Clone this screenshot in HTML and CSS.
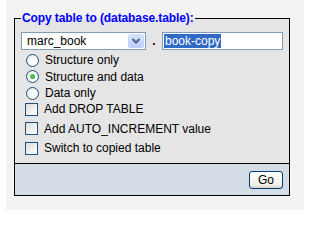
FILE: index.html
```html
<!DOCTYPE html>
<html>
<head>
<meta charset="utf-8">
<link rel="stylesheet" href="styles.css">
</head>
<body>
<div class="page">
  <fieldset class="box">
    <legend class="title">Copy table to (database.table):</legend>
    <div class="content">
      <div class="target">
        <div class="select">
          <span class="select-text">marc_book</span>
          <span class="select-btn">
            <svg width="16" height="14" viewBox="0 0 16 14"><path d="M4.5 5 L8 8.5 L11.5 5" fill="none" stroke="#4d6185" stroke-width="2"/></svg>
          </span>
        </div>
        <span class="dot">.</span>
        <div class="textbox"><span class="sel">book-copy</span></div>
      </div>
      <div class="options">
        <label class="row radio-row"><span class="radio"></span>Structure only</label>
        <label class="row radio-row"><span class="radio checked"></span>Structure and data</label>
        <label class="row radio-row"><span class="radio"></span>Data only</label>
      </div>
      <div class="checks">
        <label class="row check-row"><span class="check"></span>Add DROP TABLE</label>
        <label class="row check-row"><span class="check"></span>Add AUTO_INCREMENT value</label>
        <label class="row check-row"><span class="check"></span>Switch to copied table</label>
      </div>
    </div>
    <div class="footer">
      <button class="go">Go</button>
    </div>
  </fieldset>
</div>
</body>
</html>
```

FILE: styles.css
```css
html, body {
  margin: 0;
  padding: 0;
  background: #ffffff;
}
body {
  font-family: "Liberation Sans", Arial, sans-serif;
  font-size: 12px;
  color: #000;
}
.page {
  margin-left: 6px;
  width: 298px;
  height: 210px;
  background: #f3f3f3;
  padding: 12px 0 0 8px;
  box-sizing: border-box;
}
.box {
  width: 276px;
  box-sizing: border-box;
  margin: 0;
  padding: 0;
  border: 1px solid #000;
  background: #e5e5e5;
  min-width: 0;
}
.title {
  color: #0000ff;
  font-weight: bold;
  font-size: 12px;
  padding: 0 1px;
  margin-left: 6px;
  line-height: 13px;
  letter-spacing: -0.1px;
}
.content {
  padding: 7px 6px 5px 6px;
}
.target {
  display: flex;
  align-items: center;
  height: 18px;
}
.select {
  width: 125px;
  height: 18px;
  box-sizing: border-box;
  border: 1px solid #7f9db9;
  background: #fff;
  display: flex;
  align-items: center;
  justify-content: space-between;
  padding: 0 1px 0 5px;
}
.select-text {
  line-height: 16px;
}
.select-btn {
  width: 16px;
  height: 14px;
  background: linear-gradient(#d6e3fe, #b8cdf8);
  border-radius: 2px;
  display: flex;
}
.dot {
  width: 16px;
  text-align: center;
  font-weight: bold;
}
.textbox {
  width: 121px;
  height: 18px;
  box-sizing: border-box;
  border: 1px solid #7f9db9;
  background: #fff;
  padding: 1px 0 0 1px;
}
.sel {
  display: inline-block;
  background: #316ac5;
  color: #fff;
  line-height: 14px;
  padding: 0 1px;
}
.options {
  margin-top: 2px;
}
.checks {
  margin-top: -2px;
}
.row {
  display: flex;
  align-items: center;
  gap: 6px;
  padding-left: 5px;
}
.radio-row {
  height: 16.5px;
}
.check-row {
  height: 19.5px;
  padding-left: 4px;
}
.radio {
  width: 13px;
  height: 13px;
  box-sizing: border-box;
  border: 1px solid #1c5180;
  border-radius: 50%;
  background: radial-gradient(circle at 60% 60%, #ffffff 30%, #dcdcd6 100%);
  display: flex;
  align-items: center;
  justify-content: center;
}
.radio.checked::after {
  content: "";
  width: 5px;
  height: 5px;
  border-radius: 50%;
  background: radial-gradient(circle at 40% 40%, #5fd35f, #21a121);
}
.check {
  width: 13px;
  height: 13px;
  box-sizing: border-box;
  border: 1px solid #1c5180;
  background: linear-gradient(135deg, #dcdcd7, #ffffff);
}
.footer {
  border-top: 1px solid #000;
  background: #d4dde5;
  height: 31px;
  display: flex;
  align-items: center;
  justify-content: flex-end;
  padding-right: 6px;
}
.go {
  font-family: "Liberation Sans", Arial, sans-serif;
  font-size: 12px;
  width: 34px;
  height: 18px;
  padding: 0;
  border: 1px solid #003c74;
  border-radius: 3px;
  background: linear-gradient(#ffffff, #f0f0ea 80%, #d6d0c5);
  color: #000;
}
```
